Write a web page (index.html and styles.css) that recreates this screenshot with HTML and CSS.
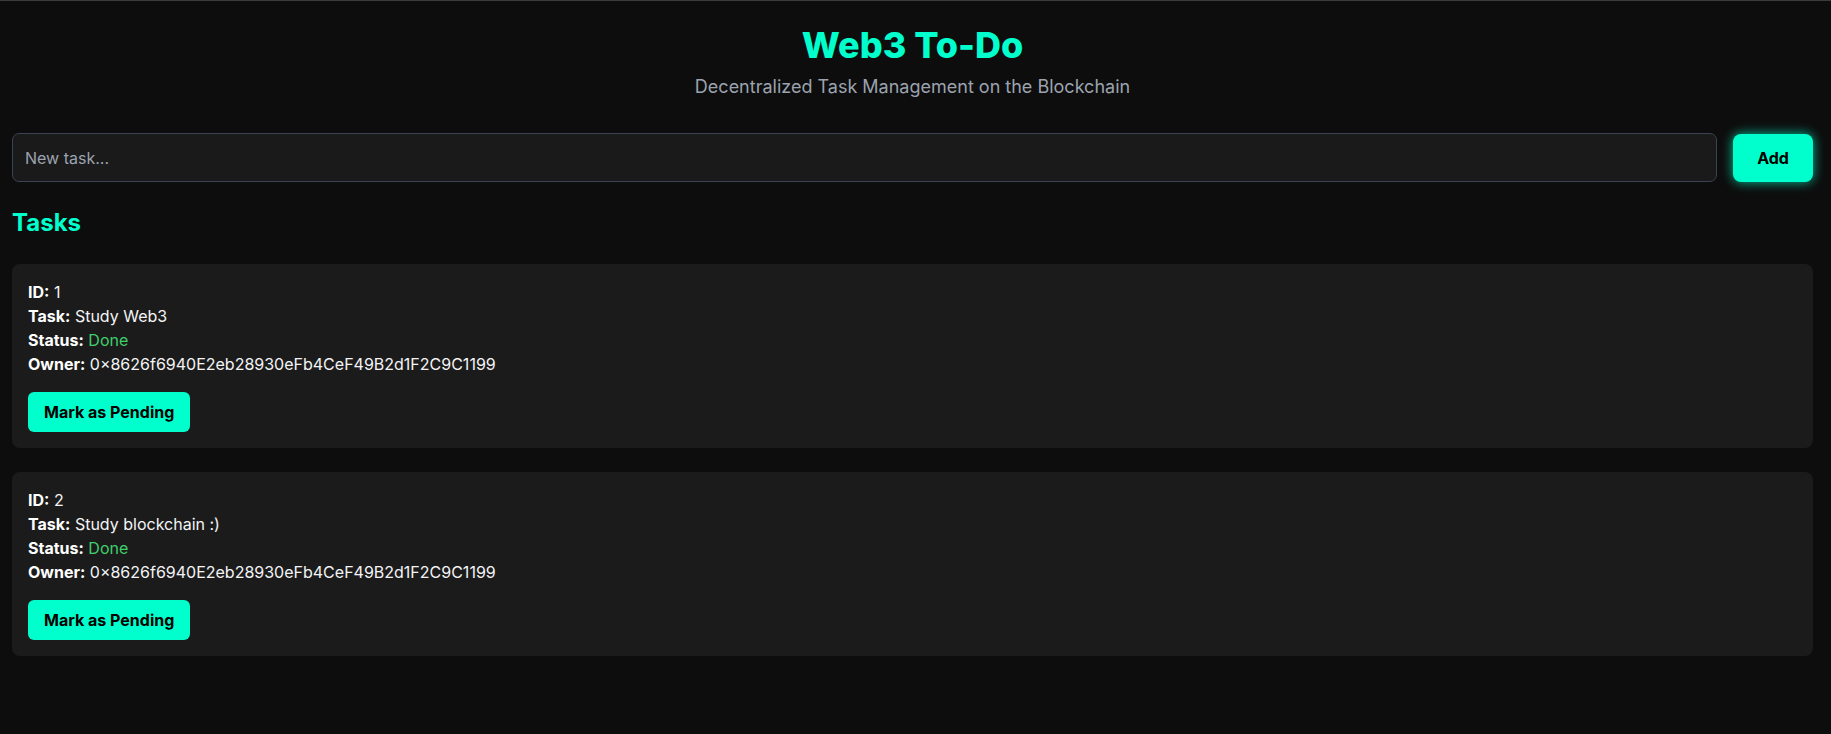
FILE: index.html
```html
<!DOCTYPE html>
<html lang="en">
<head>
<meta charset="utf-8">
<title>Web3 To-Do</title>
<link rel="stylesheet" href="styles.css">
</head>
<body>
<div class="app">
  <header class="header">
    <h1 class="title">Web3 To-Do</h1>
    <p class="subtitle">Decentralized Task Management on the Blockchain</p>
  </header>
  <div class="new-task">
    <input class="task-input" type="text" placeholder="New task...">
    <button class="add-btn">Add</button>
  </div>
  <h2 class="section-title">Tasks</h2>
  <div class="task-list">
    <div class="task-card">
      <div class="line"><strong>ID:</strong> 1</div>
      <div class="line"><strong>Task:</strong> Study Web3</div>
      <div class="line"><strong>Status:</strong> <span class="done">Done</span></div>
      <div class="line"><strong>Owner:</strong> 0×8626f6940E2eb28930eFb4CeF49B2d1F2C9C1199</div>
      <button class="toggle-btn">Mark as Pending</button>
    </div>
    <div class="task-card">
      <div class="line"><strong>ID:</strong> 2</div>
      <div class="line"><strong>Task:</strong> Study blockchain :)</div>
      <div class="line"><strong>Status:</strong> <span class="done">Done</span></div>
      <div class="line"><strong>Owner:</strong> 0×8626f6940E2eb28930eFb4CeF49B2d1F2C9C1199</div>
      <button class="toggle-btn">Mark as Pending</button>
    </div>
  </div>
</div>
</body>
</html>
```
FILE: styles.css
```css
* { box-sizing: border-box; }
html, body { height: 100%; }
body {
  margin: 0;
  background: #0d0d0d;
  border-top: 1px solid #3a3a3a;
  font-family: Inter, "Noto Sans", sans-serif;
  color: #ffffff;
}
.app {
  padding: 0 18px 0 12px;
}
.header {
  text-align: center;
}
.title {
  margin: 22px 0 0;
  font-size: 36px;
  line-height: 44px;
  font-weight: 800;
  color: #00ffcc;
}
.subtitle {
  margin: 8px 0 0;
  font-size: 18px;
  line-height: 24px;
  color: #9ca3af;
}
.new-task {
  display: flex;
  align-items: center;
  gap: 16px;
  margin-top: 34px;
}
.task-input {
  flex: 1;
  height: 49px;
  padding: 0 12px;
  background: #1a1a1a;
  border: 1px solid #3b4252;
  border-radius: 7px;
  color: #e5e5e5;
  font-family: Inter, sans-serif;
  font-size: 16px;
  outline: none;
}
.task-input::placeholder {
  color: #9ca3af;
}
.add-btn {
  width: 80px;
  height: 48px;
  border: none;
  border-radius: 8px;
  background: #00ffcc;
  color: #000;
  font-family: Inter, sans-serif;
  font-size: 16px;
  font-weight: 700;
  box-shadow: 0 0 12px rgba(0, 255, 204, 0.75);
}
.section-title {
  margin: 27px 0 0;
  font-size: 24px;
  line-height: 28px;
  font-weight: 700;
  color: #00ffcc;
}
.task-list {
  display: flex;
  flex-direction: column;
  gap: 24px;
  margin-top: 27px;
}
.task-card {
  background: #1b1b1b;
  border-radius: 8px;
  padding: 16px;
  display: flex;
  flex-direction: column;
  align-items: flex-start;
}
.line {
  font-size: 16px;
  line-height: 24px;
  color: #f3f4f6;
}
.line strong {
  font-weight: 700;
  color: #ffffff;
}
.done {
  color: #3fcf6b;
}
.toggle-btn {
  margin-top: 16px;
  height: 40px;
  padding: 0 16px;
  border: none;
  border-radius: 6px;
  background: #00ffcc;
  color: #000;
  font-family: Inter, sans-serif;
  font-size: 16px;
  font-weight: 700;
}
```
